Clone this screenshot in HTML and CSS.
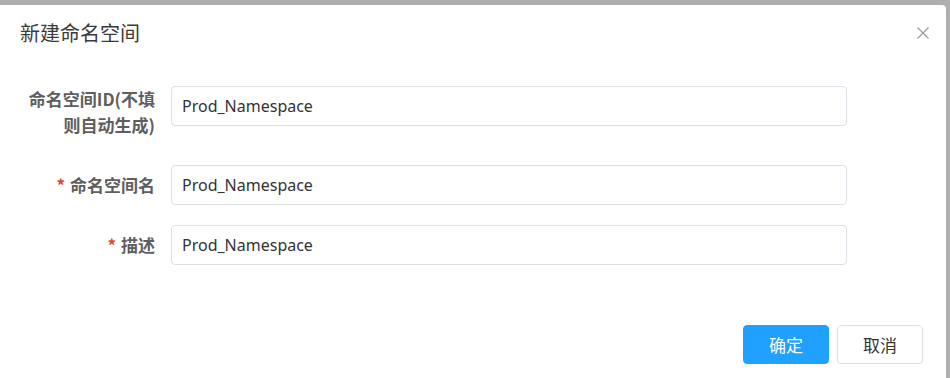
FILE: index.html
```html
<!DOCTYPE html>
<html lang="zh-CN">
<head>
    <meta charset="UTF-8">
    <title>新建命名空间</title>
    <link rel="stylesheet" href="styles.css">
</head>
<body>
    <div class="dialog">
        <div class="dialog-header">
            <span class="dialog-title">新建命名空间</span>
            <button class="dialog-close" aria-label="关闭">
                <svg width="12" height="12" viewBox="0 0 12 12">
                    <path d="M0.5 0.5 L11.5 11.5 M11.5 0.5 L0.5 11.5" stroke="#9a9a9a" stroke-width="1.2" fill="none"/>
                </svg>
            </button>
        </div>

        <form class="form">
            <div class="form-item form-item-tall">
                <label class="form-label">命名空间ID(不填<br>则自动生成)</label>
                <input class="form-input" type="text" value="Prod_Namespace">
            </div>
            <div class="form-item">
                <label class="form-label"><span class="required">*</span>命名空间名</label>
                <input class="form-input" type="text" value="Prod_Namespace">
            </div>
            <div class="form-item">
                <label class="form-label"><span class="required">*</span>描述</label>
                <input class="form-input" type="text" value="Prod_Namespace">
            </div>
        </form>

        <div class="dialog-footer">
            <button class="btn btn-primary" type="button">确定</button>
            <button class="btn" type="button">取消</button>
        </div>
    </div>
</body>
</html>
```

FILE: styles.css
```css
body {
    margin: 0;
    padding: 0;
    background-color: #afafaf;
    font-family: "Noto Sans CJK SC", "Noto Sans", sans-serif;
    overflow: hidden;
}

.dialog {
    margin-top: 5px;
    margin-left: -4px;
    width: 950px;
    height: 400px;
    background-color: #fff;
    border-radius: 4px;
}

.dialog-header {
    display: flex;
    justify-content: space-between;
    align-items: center;
    padding: 16px 17px 0 24px;
    height: 24px;
}

.dialog-title {
    font-size: 20px;
    line-height: 24px;
    color: #3a3a3a;
}

.dialog-close {
    border: none;
    background: none;
    padding: 0;
    width: 12px;
    height: 12px;
    cursor: pointer;
    display: flex;
}

.form {
    margin-top: 41px;
}

.form-item {
    display: grid;
    grid-template-columns: 159px 676px;
    column-gap: 16px;
    margin-bottom: 20px;
}

.form-item-tall {
    margin-bottom: 27px;
}

.form-label {
    text-align: right;
    font-size: 17px;
    font-weight: bold;
    line-height: 40px;
    color: #5e5e5e;
}

.form-item-tall .form-label {
    line-height: 26px;
}

.required {
    color: #e5432f;
    margin-right: 5px;
}

.form-input {
    box-sizing: border-box;
    height: 40px;
    margin: 0;
    padding: 0 10px;
    border: 1px solid #dcdfe6;
    border-radius: 4px;
    font-family: "Noto Sans", sans-serif;
    font-size: 16px;
    color: #333;
    outline: none;
}

.dialog-footer {
    display: flex;
    justify-content: flex-end;
    gap: 8px;
    padding: 40px 23px 0 0;
}

.btn {
    width: 86px;
    height: 39px;
    border: 1px solid #dcdfe6;
    border-radius: 4px;
    background-color: #fff;
    color: #333;
    font-family: "Noto Sans CJK SC", sans-serif;
    font-size: 17px;
    cursor: pointer;
}

.btn-primary {
    background-color: #20a0ff;
    border-color: #20a0ff;
    color: #fff;
}
```
